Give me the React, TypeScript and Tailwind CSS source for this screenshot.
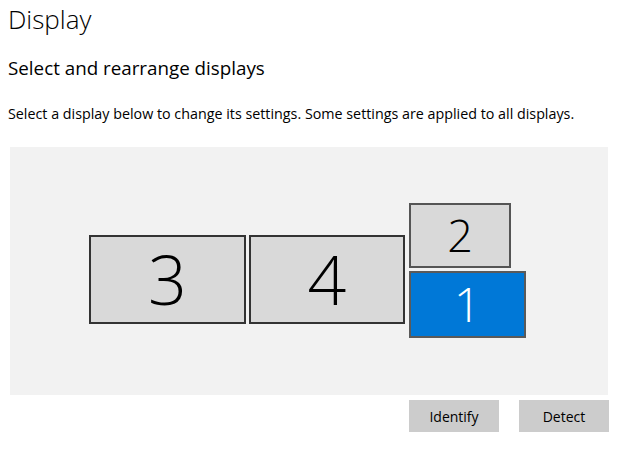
const monitors = [
  { id: 3, x: 79, y: 88, w: 157, h: 89, size: "text-[68px]", selected: false, border: "border-[#333333]" },
  { id: 4, x: 239, y: 88, w: 156, h: 89, size: "text-[68px]", selected: false, border: "border-[#333333]" },
  { id: 2, x: 399, y: 56, w: 102, h: 65, size: "text-[45px]", selected: false, border: "border-[#555555]" },
  { id: 1, x: 399, y: 124, w: 117, h: 67, size: "text-[48px]", selected: true, border: "border-[#5a5a5a]" },
]

export default function App() {
  return (
    <div className="w-[638px] h-[450px] bg-white text-black overflow-hidden" style={{ fontFamily: '"Open Sans", "Noto Sans", sans-serif' }}>
      <div className="pl-2 pt-[3px]">
        <h1 className="text-[26px] font-light leading-[32px]">Display</h1>
        <h2 className="mt-[21px] text-[18.8px] leading-[24px]">Select and rearrange displays</h2>
        <p className="mt-[24px] text-[14.3px] leading-[20px]">
          Select a display below to change its settings. Some settings are applied to all displays.
        </p>
      </div>

      <div className="ml-[10px] mt-[23px] w-[598px] h-[248px] bg-[#f2f2f2] relative">
        {monitors.map((m) => (
          <div
            key={m.id}
            className={`absolute border-2 ${m.border} flex items-center justify-center font-light leading-none ${m.size} ${
              m.selected ? "bg-[#0078d7] text-white" : "bg-[#d9d9d9] text-black"
            }`}
            style={{ left: m.x, top: m.y, width: m.w, height: m.h }}
          >
            <span className="-mt-[2px]">{m.id}</span>
          </div>
        ))}
      </div>

      <div className="w-[609px] mt-[5px] flex justify-end gap-5">
        <button className="w-[90px] h-[32px] bg-[#cccccc] text-[14px] text-black">Identify</button>
        <button className="w-[90px] h-[32px] bg-[#cccccc] text-[14px] text-black">Detect</button>
      </div>
    </div>
  )
}
